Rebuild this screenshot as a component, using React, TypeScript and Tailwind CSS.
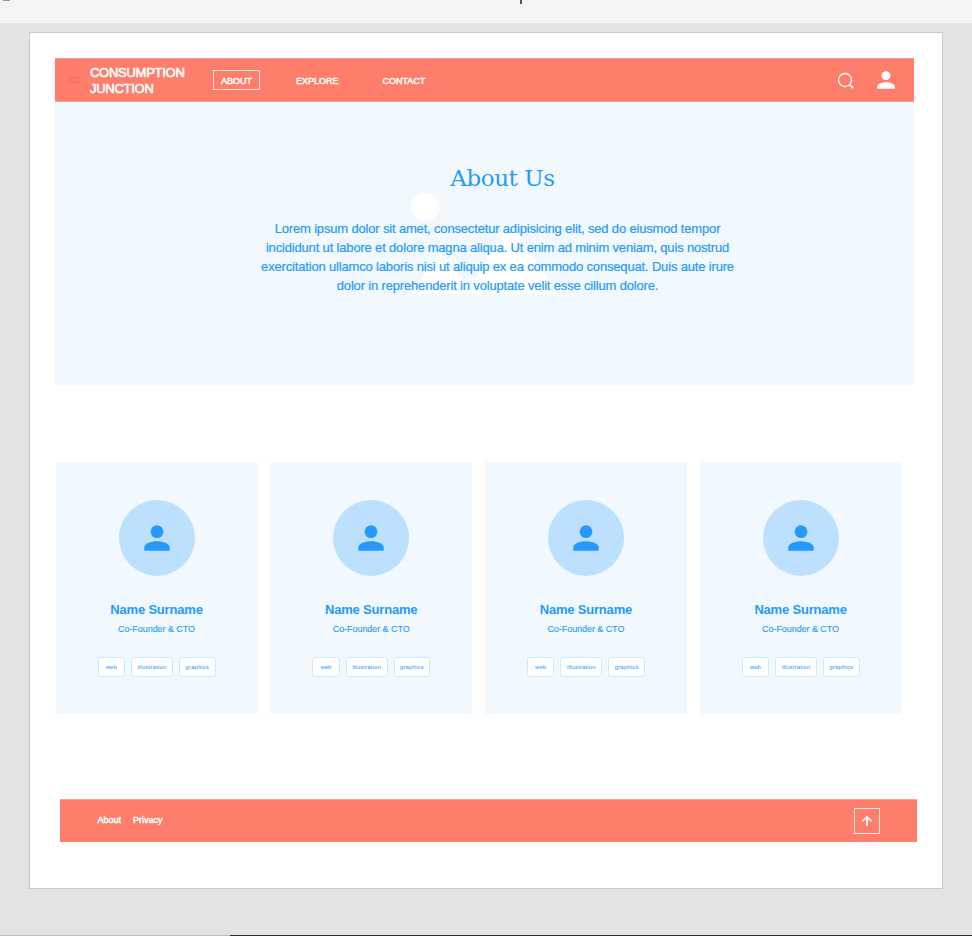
import type { ReactNode } from "react";

function Person({ className }: { className: string }) {
  return (
    <svg viewBox="0 0 26 26" className={className} fill="currentColor">
      <circle cx="13" cy="6.7" r="6.4" />
      <path d="M0.3 25.7v-3.3c0-4 6.7-6.2 12.7-6.2s12.7 2.2 12.7 6.2v3.3z" />
    </svg>
  );
}

function Header() {
  return (
    <header className="flex h-[44px] w-[859px] shrink-0 items-center border-y border-[#ff9c8e] bg-[#ff7e6b] text-white">
      <span className="ml-[13px] w-[22px] pt-px text-[9px] font-bold text-[#ff6a58]">XD</span>
      <div className="w-[123px] whitespace-nowrap pt-[2px] text-[13px] leading-[16px] tracking-[-0.27px] [-webkit-text-stroke:0.6px_white]">
        CONSUMPTION
        <br />
        JUNCTION
      </div>
      <nav className="flex h-full items-center text-[9px] leading-[10px] [-webkit-text-stroke:0.45px_white]">
        <a className="flex h-[20px] w-[47px] items-center justify-center border border-[#ffe4df] pt-[2px]">ABOUT</a>
        <a className="ml-[36px] w-[86.5px] pt-[2px]">EXPLORE</a>
        <a className="pt-[2px]">CONTACT</a>
      </nav>
      <svg viewBox="0 0 18 18" className="ml-auto mt-px size-[18px]" fill="none" stroke="white" strokeWidth="1.3">
        <circle cx="8" cy="8" r="6.5" />
        <path d="M12.8 12.8l3.4 3.4" strokeWidth="1.7" />
      </svg>
      <Person className="ml-[22px] mr-[19px] size-[18px]" />
    </header>
  );
}

function Hero() {
  return (
    <section className="relative h-[283px] w-[859px] shrink-0 bg-[#f1f9ff] text-[#2699fb]">
      <svg viewBox="0 0 150 105" className="absolute left-[355px] top-[90px] h-[105px] w-[150px]" fill="white">
        <circle cx="15" cy="15.3" r="14" />
        <path d="M1.5 102L27 64Q30 58 34 64L55 90Q60 95 64 89L95 37Q100 28 105 37L148 102z" />
      </svg>
      <div className="relative flex flex-col items-center">
        <h1 className="ml-[36px] mt-[59px] whitespace-nowrap font-['DejaVu_Serif',serif] text-[23px] leading-[34px] tracking-[-0.4px]">About Us</h1>
        <p className="ml-[26px] mt-[24px] whitespace-nowrap text-center text-[13px] leading-[19px] tracking-[-0.167px] [-webkit-text-stroke:0.2px_#2699fb]">
          Lorem ipsum dolor sit amet, consectetur adipisicing elit, sed do eiusmod tempor
          <br />
          incididunt ut labore et dolore magna aliqua. Ut enim ad minim veniam, quis nostrud
          <br />
          exercitation ullamco laboris nisi ut aliquip ex ea commodo consequat. Duis aute irure
          <br />
          dolor in reprehenderit in voluptate velit esse cillum dolore.
        </p>
      </div>
    </section>
  );
}

function Tag({ className, children }: { className: string; children: ReactNode }) {
  return (
    <span className={`flex h-[20px] items-center justify-center rounded-[3px] border border-[#cfe8fe] bg-white text-[6px] ${className}`}>
      {children}
    </span>
  );
}

function Card() {
  return (
    <article className="flex h-[252px] w-[202px] flex-col items-center bg-[#f1f9ff] text-[#2699fb]">
      <div className="mt-[38px] flex size-[76px] shrink-0 items-center justify-center rounded-full bg-[#bce0fd]">
        <Person className="size-[26px]" />
      </div>
      <h2 className="mt-[25px] whitespace-nowrap text-[13px] font-bold leading-[18px] tracking-[-0.19px]">Name Surname</h2>
      <p className="mt-[4px] text-[9px] leading-[12px] tracking-[-0.06px] [-webkit-text-stroke:0.1px_#2699fb]">Co-Founder &amp; CTO</p>
      <div className="mt-[22px] flex gap-[6px]">
        <Tag className="w-[27.5px]">web</Tag>
        <Tag className="w-[42px] tracking-[0.15px]">illustration</Tag>
        <Tag className="w-[36.5px] tracking-[0.15px]">graphics</Tag>
      </div>
    </article>
  );
}

function Footer() {
  return (
    <footer className="ml-[5px] mt-[85px] flex h-[43px] w-[857px] items-center border-t border-[#ff9c8e] bg-[#ff7e6b] text-white">
      <nav className="-mt-[2px] ml-[37.5px] flex text-[9px] leading-[12px] [-webkit-text-stroke:0.5px_white]">
        <a className="w-[35.5px]">About</a>
        <a>Privacy</a>
      </nav>
      <div className="ml-auto mr-[37px] flex size-[26px] items-center justify-center border border-[#ffe9e5]">
        <svg viewBox="0 0 12 12" className="size-[12px]" fill="none" stroke="#fff0ed" strokeWidth="2">
          <path d="M6 11V2M1.3 6.4L6 1.8l4.7 4.6" />
        </svg>
      </div>
    </footer>
  );
}

export default function App() {
  return (
    <div className="flex h-[936px] w-[972px] flex-col overflow-hidden bg-[#e3e3e3] font-['Liberation_Sans',Arial,sans-serif]">
      <div className="flex h-[23px] shrink-0 items-start bg-[#f4f4f4]">
        <span className="ml-[3px] h-px w-[7px] bg-[#999]" />
        <span className="ml-[510px] h-[4px] w-[2px] bg-[#555]" />
      </div>
      <main className="ml-[29px] mt-[9px] h-[857px] w-[914px] shrink-0 border border-[#c9c9c9] bg-white pl-[25px] pt-[25px]">
        <Header />
        <Hero />
        <section className="ml-[0.5px] mt-[77px] flex gap-[12.7px]">
          <Card />
          <Card />
          <Card />
          <Card />
        </section>
        <Footer />
      </main>
      <div className="mt-auto flex h-px shrink-0">
        <span className="w-[230px] bg-[#bdbdbd]" />
        <span className="flex-1 bg-[#292b2e]" />
      </div>
    </div>
  );
}
